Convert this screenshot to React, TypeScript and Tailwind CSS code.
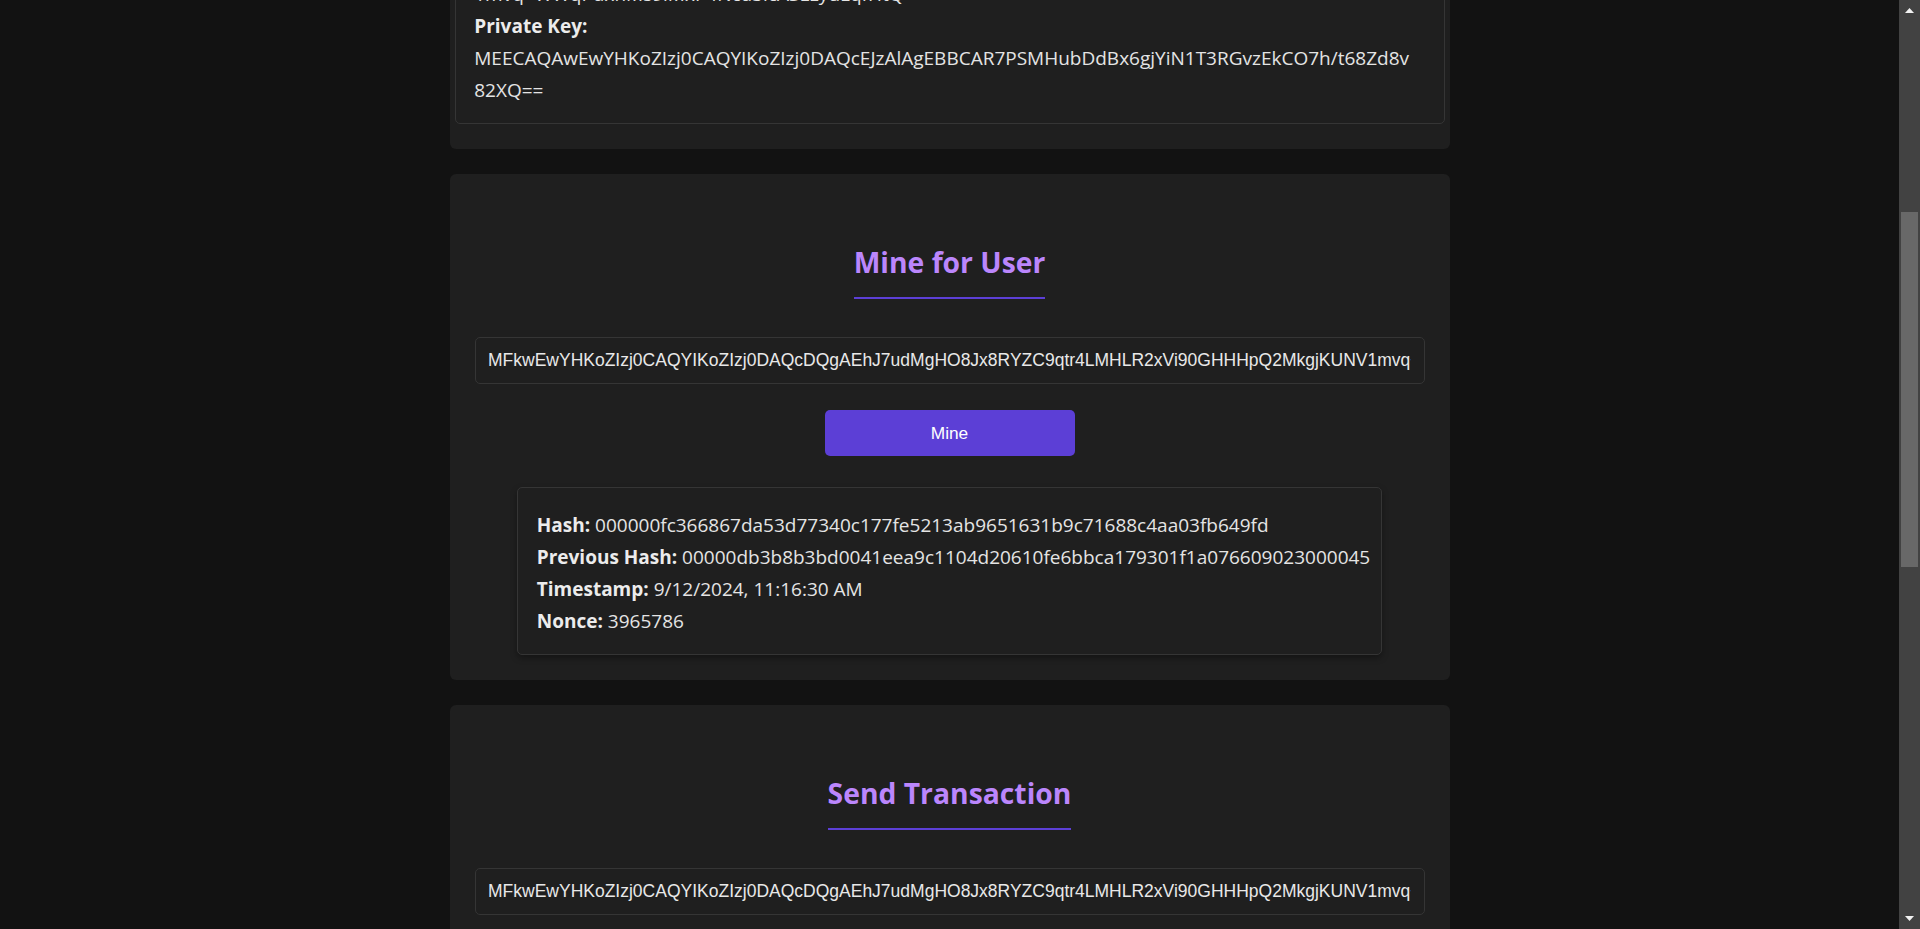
const PUBLIC_KEY =
  "MFkwEwYHKoZIzj0CAQYIKoZIzj0DAQcDQgAEhJ7udMgHO8Jx8RYZC9qtr4LMHLR2xVi90GHHHpQ2MkgjKUNV1mvq+WWqPdxhMs9iMxP4Ncd3lcASEzyuLqfHtQ=="

const PRIVATE_KEY_LINES = [
  "MEECAQAwEwYHKoZIzj0CAQYIKoZIzj0DAQcEJzAlAgEBBCAR7PSMHubDdBx6gjYiN1T3RGvzEkCO7h/t68Zd8v",
  "82XQ==",
]

const block = {
  hash: "000000fc366867da53d77340c177fe5213ab9651631b9c71688c4aa03fb649fd",
  previousHash: "00000db3b8b3bd0041eea9c1104d20610fe6bbca179301f1a076609023000045",
  timestamp: "9/12/2024, 11:16:30 AM",
  nonce: 3965786,
}

function SectionTitle({ children }: { children: React.ReactNode }) {
  return (
    <div className="flex h-[138px] items-start justify-center">
      <h2 className="mt-[42.7px] border-b-[2.5px] border-[#5c3fd6] pb-[15px] text-[28.3px] leading-[40px] font-bold text-[#bb86fc]">
        {children}
      </h2>
    </div>
  )
}

function KeyInput({ value }: { value: string }) {
  return (
    <input
      readOnly
      value={value}
      className="block h-[47px] w-full rounded-[5px] border border-[#353535] bg-[#1f1f1f] px-[12.5px] font-['Liberation_Sans',Arial,sans-serif] text-[17.5px] text-[#e8e8e8] outline-none"
    />
  )
}

function Scrollbar() {
  return (
    <div className="flex w-[21px] shrink-0 flex-col bg-[#424242]">
      <div className="flex h-[21px] items-center justify-center">
        <svg width="9" height="5" viewBox="0 0 9 5">
          <polygon points="4.5,0 9,5 0,5" fill="#f2f2f2" />
        </svg>
      </div>
      <div className="flex-1">
        <div className="mx-[2px] mt-[191px] h-[355px] bg-[#686868]" />
      </div>
      <div className="flex h-[21px] items-center justify-center">
        <svg width="9" height="5" viewBox="0 0 9 5">
          <polygon points="0,0 9,0 4.5,5" fill="#f2f2f2" />
        </svg>
      </div>
    </div>
  )
}

export default function App() {
  return (
    <div className="flex h-[929px] overflow-hidden bg-[#121212] font-['Open_Sans',sans-serif] text-[19px] leading-[32px] text-[#e4e4e4]">
      <div className="flex-1 overflow-hidden">
        <main className="mx-auto flex w-[1000px] flex-col gap-[25.5px]">
          {/* Wallet card (scrolled mostly out of view) */}
          <section className="mt-[-271px] rounded-[6px] bg-[#1f1f1f] px-[5px] pt-[25px] pb-[25px]">
            <SectionTitle>Create Wallet</SectionTitle>
            <div className="rounded-[5px] border border-[#353535] bg-[#1f1f1f] px-[18.75px] pt-[20.75px] pb-[16.75px] whitespace-nowrap">
              <div className="font-bold text-[#ececec]">Public Key:</div>
              <div>{PUBLIC_KEY.slice(0, 84)}</div>
              <div>{PUBLIC_KEY.slice(84)}</div>
              <div className="font-bold text-[#ececec]">Private Key:</div>
              {PRIVATE_KEY_LINES.map((line) => (
                <div key={line}>{line}</div>
              ))}
            </div>
          </section>

          {/* Mine for User */}
          <section className="rounded-[6px] bg-[#1f1f1f] p-[25px]">
            <SectionTitle>Mine for User</SectionTitle>
            <KeyInput value={PUBLIC_KEY} />
            <button className="mx-auto mt-[26px] block h-[46px] w-[250px] rounded-[5px] bg-[#5c3fd6] font-['Liberation_Sans',Arial,sans-serif] text-[17.3px] text-white">
              Mine
            </button>
            <div className="mx-auto mt-[31px] w-[865px] rounded-[5px] border border-[#353535] bg-[#1f1f1f] px-[18.75px] pt-[20.75px] pb-[16.75px] whitespace-nowrap shadow-[0_3px_6px_rgba(0,0,0,0.35)]">
              <div>
                <span className="font-bold text-[#ececec]">Hash:</span> {block.hash}
              </div>
              <div>
                <span className="font-bold text-[#ececec]">Previous Hash:</span> {block.previousHash}
              </div>
              <div>
                <span className="font-bold text-[#ececec]">Timestamp:</span> {block.timestamp}
              </div>
              <div>
                <span className="font-bold text-[#ececec]">Nonce:</span> {block.nonce}
              </div>
            </div>
          </section>

          {/* Send Transaction */}
          <section className="rounded-[6px] bg-[#1f1f1f] p-[25px]">
            <SectionTitle>Send Transaction</SectionTitle>
            <KeyInput value={PUBLIC_KEY} />
            <input
              placeholder="Amount"
              className="mt-[25px] block h-[47px] w-full rounded-[5px] border border-[#353535] bg-[#1f1f1f] px-[12.5px] font-['Liberation_Sans',Arial,sans-serif] text-[17.5px] text-[#e8e8e8] outline-none"
            />
          </section>
        </main>
      </div>
      <Scrollbar />
    </div>
  )
}
